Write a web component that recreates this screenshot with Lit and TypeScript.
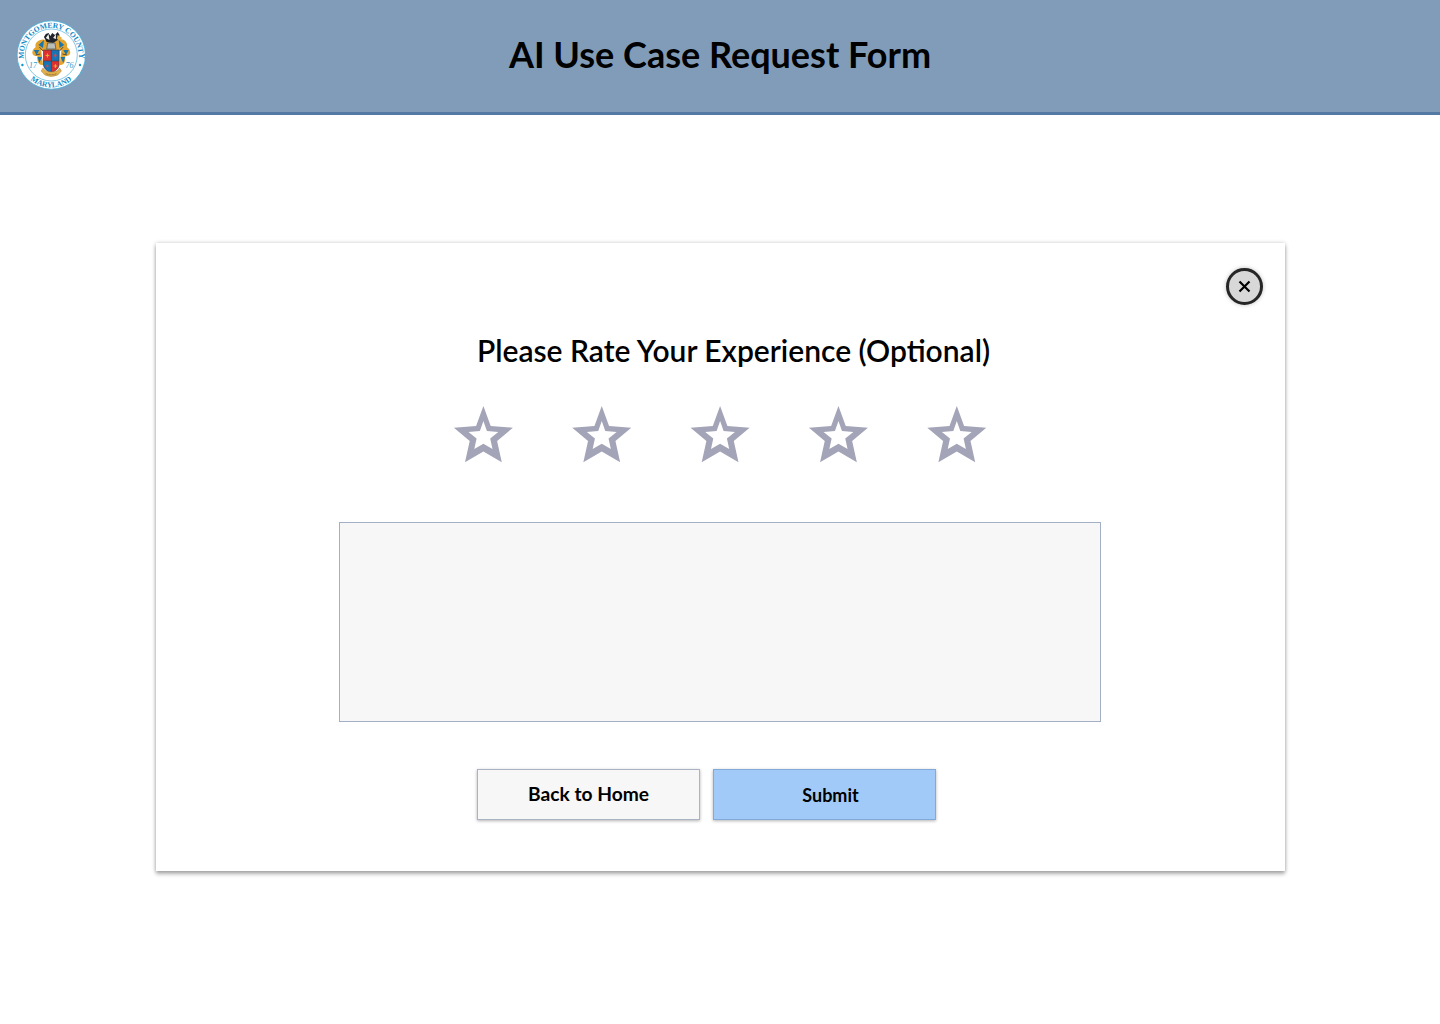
import { LitElement, html, svg, css } from 'lit';
import { customElement, state } from 'lit/decorators.js';

@customElement('county-seal')
export class CountySeal extends LitElement {

    static styles = css`
        :host{
            display: block;
            width: 70px;
            height: 70px;
        }
        svg{
            display: block;
        }
        .ring{
            font-family: "Liberation Serif", serif;
            font-weight: bold;
            font-size: 7.6px;
            fill: #0f8ac8;
        }
        .year{
            font-family: "Liberation Serif", serif;
            font-style: italic;
            font-size: 8px;
            fill: #2a9bcd;
        }
    `;

    render() {
        return html`
            <svg width="70" height="70" viewBox="0 0 70 70">
                <defs>
                    <path id="top" d="M7.8 43 V35.3 A27.4 27.4 0 0 1 62.6 35.3 V43"/>
                    <path id="bottom" d="M2.8 35 A32.4 32.4 0 0 0 67.6 35"/>
                </defs>
                <circle cx="35.3" cy="35" r="34.2" fill="#fff" stroke="#43b0dc" stroke-width="0.8"/>
                <circle cx="35.3" cy="35" r="26" fill="none" stroke="#64bde0" stroke-width="0.8"/>
                <text class="ring" text-anchor="middle"><textPath href="#top" startOffset="50%">MONTGOMERY COUNTY</textPath></text>
                <text class="ring" text-anchor="middle"><textPath href="#bottom" startOffset="50%">MARYLAND</textPath></text>
                <circle cx="6.4" cy="45" r="1.2" fill="#1496cf"/>
                <circle cx="64" cy="45" r="1.2" fill="#1496cf"/>
                <g transform="translate(35.3 0) scale(0.92 1) translate(-35 0)">
                    <!-- mantling -->
                    <path d="M33 22 C25 16 16 22 18 27 C12 31 14 37 20 36 C19 40 21 46 26 45 L24 30 L46 30 L44 45 C49 46 51 40 50 36 C56 37 58 31 52 27 C54 20 43 16 37 22Z" fill="#e3a52f"/>
                    <path d="M27 20 L21 25 L26 28Z M43 20 L49 25 L44 28Z M16 30 L22 30 L19 35Z M54 30 L48 30 L51 35Z M20 37 L25 37 L22 43Z M50 37 L45 37 L48 43Z" fill="#1b74aa"/>
                    <path d="M22 27 L26 31 M48 27 L44 31 M18 35 L23 34 M52 35 L47 34" stroke="#554a38" stroke-width="1"/>
                    <!-- crest -->
                    <path d="M27 17 L29 14 L32 13 L34 16 L36 13 L39 15 L42 12 L44 15 L42 20 L37 23 L30 22Z" fill="#20242b"/>
                    <path d="M29 18 L32 14 L33 20Z M37 18 L40 14 L40 19Z" fill="#f3f3ee"/>
                    <path d="M42 15 L47 18 L44 20 L41 19Z" fill="#e7b33e"/>
                    <path d="M31 23 H39 L40 29 H30Z" fill="#b9bdb8" stroke="#51575a" stroke-width="0.8"/>
                    <!-- shield -->
                    <path d="M26.5 30 H43.5 V44 C43.5 49 39 51 35 53 C31 51 26.5 49 26.5 44Z" fill="#dc302e"/>
                    <path d="M35 30 H43.5 V41 H35Z M26.5 41 H35 V53 C31 51 26.5 49 26.5 44Z" fill="#1875b5"/>
                    <path d="M26.5 30 H43.5 V44 C43.5 49 39 51 35 53 C31 51 26.5 49 26.5 44Z M35 30 V53 M26.5 41 H43.5" fill="none" stroke="#393c54" stroke-width="0.7"/>
                    <path d="M28.8 35.5 H32.8 M30.8 33.5 V37.5 M37.5 46 H41.5 M39.5 44.2 V48" stroke="#e7a936" stroke-width="1.2"/>
                    <path d="M39.4 33 L41 35.5 L39.4 38 L37.8 35.5Z M30.7 44 L32.2 46 L30.7 48 L29.2 46Z" fill="#c84a52"/>
                    <path d="M26 48 Q28 52 35 52 Q42 52 44 48 L46 51 L42 55 Q35 58 28 55 L24 51Z" fill="#e3b04a" stroke="#9b7b3b" stroke-width="0.5"/>
                    <path d="M29 53.5 Q35 56 41 53.5" fill="none" stroke="#5f523a" stroke-width="0.9" stroke-dasharray="1 0.7"/>
                </g>
                <text class="year" x="13" y="47.8">17</text>
                <text class="year" x="49.6" y="47.8">76</text>
            </svg>
        `;
    }
}

const STAR_STEP = 118.35;

@customElement('star-rating')
export class StarRating extends LitElement {

    static styles = css`
        :host{
            display: block;
        }
        .stars{
            display: block;
            overflow: visible;
        }
        .star{
            fill: #a3a4b7;
            cursor: pointer;
        }
    `;

    @state() rating = 0;

    render() {
        return html`
            <svg class="stars" width="533" height="57" viewBox="0 0 533 57">
                ${[1, 2, 3, 4, 5].map(
                    (value) => svg`
                        <path
                            class="star"
                            fill-rule="evenodd"
                            transform="translate(${(value - 1) * STAR_STEP - 0.1} 0)"
                            d=${this.starPath(value <= this.rating)}
                            @click=${() => this.rate(value)}
                        />
                    `)}
            </svg>
        `;
    }

    starPath(filled: boolean) {
        const outline = 'M29.5 0L36.8 20L59 21.7L43.2 35L47.9 56.3L29.5 45.4L11.1 56.3L15.8 35L0 21.7L22.2 20Z';
        const hole = 'M29.5 15L33 24.9L44.4 25.9L36.3 32.6L38.6 43L29.5 37.8L20.4 43L22.7 32.6L14.6 25.9L26 24.9Z';
        return filled ? outline : outline + hole;
    }

    rate(value: number) {
        this.rating = value;
        this.dispatchEvent(new CustomEvent('rate', { detail: { value } }));
    }
}

@customElement('app-root')
export class AppRoot extends LitElement {

    static styles = css`
        :host{
            display: flex;
            flex-direction: column;
            align-items: center;
            min-height: 1024px;
            background-color: #fff;
            color: #000;
            font-family: Lato, sans-serif;
        }
        .header{
            box-sizing: border-box;
            width: 100%;
            height: 115px;
            padding: 0 16px;
            display: grid;
            grid-template-columns: 70px 1fr 70px;
            align-items: center;
            background-color: #819cb9;
            border-bottom: 3px solid #5579a5;
        }
        .seal{
            margin-bottom: 3px;
        }
        .title{
            margin: 0;
            padding-bottom: 4px;
            text-align: center;
            font-size: 36px;
            font-weight: 700;
            line-height: 44px;
        }
        .card{
            box-sizing: border-box;
            width: 1129px;
            height: 628px;
            margin: 128px 0 0 1px;
            padding: 25px 22px 0;
            display: flex;
            flex-direction: column;
            align-items: center;
            background-color: #fff;
            box-shadow: 0 3px 4px rgba(0, 0, 0, 0.3), 0 0 4px rgba(0, 0, 0, 0.2);
        }
        .close{
            box-sizing: border-box;
            align-self: flex-end;
            width: 37px;
            height: 37px;
            padding: 0;
            display: grid;
            place-items: center;
            border: 3px solid #262626;
            border-radius: 50%;
            background-color: #d8d8d8;
            box-shadow: 0 0 4px rgba(0, 0, 0, 0.25);
        }
        .question{
            margin: 26px 0 0 26px;
            font-size: 30px;
            font-weight: 600;
            line-height: 38px;
        }
        .rating{
            margin-top: 37px;
        }
        .comment{
            box-sizing: border-box;
            width: 762px;
            height: 200px;
            margin: 59px 1px 0 0;
            padding: 10px;
            resize: none;
            border: 1px solid #a3afc4;
            border-radius: 0;
            background-color: #f7f7f7;
            font: inherit;
        }
        .actions{
            display: flex;
            gap: 13px;
            margin: 47px 28px 0 0;
        }
        .button{
            box-sizing: border-box;
            width: 223px;
            height: 51px;
            padding: 0 0 2px;
            border: 1px solid #a9b3c3;
            background-color: #f7f7f7;
            box-shadow: 0 1px 3px rgba(0, 0, 0, 0.3);
            color: #000;
            font-family: inherit;
            font-size: 19.2px;
            font-weight: 700;
        }
        .submit{
            padding: 0 0 0 12px;
            border-color: #82aad7;
            background-color: #a2caf9;
            font-size: 18px;
        }
    `;

    render() {
        return html`
            <header class="header">
                <county-seal class="seal"></county-seal>
                <h1 class="title">AI Use Case Request Form</h1>
            </header>
            <section class="card">
                <button class="close" aria-label="Close">
                    <svg width="13" height="13" viewBox="0 0 13 13">
                        <path d="M1.5 1.5L11.5 11.5M11.5 1.5L1.5 11.5" stroke="#000" stroke-width="2.2"/>
                    </svg>
                </button>
                <h2 class="question">Please Rate Your Experience (Optional)</h2>
                <star-rating class="rating"></star-rating>
                <textarea class="comment" aria-label="Comments"></textarea>
                <div class="actions">
                    <button class="button">Back to Home</button>
                    <button class="button submit">Submit</button>
                </div>
            </section>
        `;
    }
}
